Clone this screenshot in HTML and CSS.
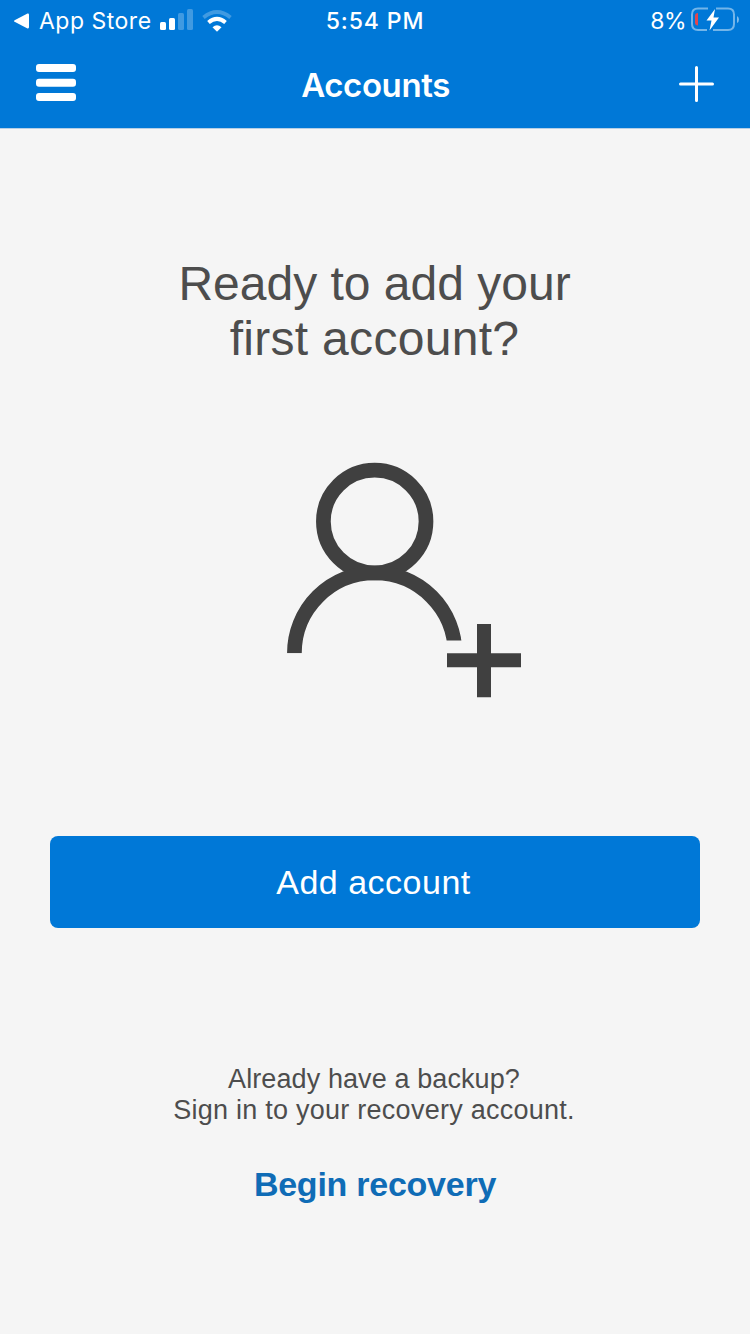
FILE: index.html
```html
<!DOCTYPE html>
<html lang="en">
<head>
  <meta charset="utf-8">
  <title>Accounts</title>
  <link rel="stylesheet" href="styles.css">
</head>
<body>
  <header>
    <div class="statusbar">
      <div class="status-left">
        <svg class="back" width="16" height="16" viewBox="0 0 16 16"><path d="M0.6 7.2 L13.5 0.6 Q15 0.2 15 2 V14 Q15 15.8 13.5 15.4 L0.6 8.8 Q-0.6 8 0.6 7.2 Z" fill="#fff"/></svg>
        <span class="carrier">App Store</span>
        <svg class="signal" width="34" height="22" viewBox="0 0 34 22" fill="#fff">
          <rect x="0" y="13" width="6" height="8" rx="1.5"/>
          <rect x="9" y="9" width="6" height="12" rx="1.5"/>
          <rect x="18" y="4" width="6" height="17" rx="1.5" opacity=".25"/>
          <rect x="27" y="0" width="6" height="21" rx="1.5" opacity=".25"/>
        </svg>
        <svg class="wifi" width="30" height="22" viewBox="0 0 30 22" fill="none" stroke="#fff">
          <path d="M1.5 7.5 Q15 -3.5 28.5 7.5" stroke-width="3.8" opacity=".25"/>
          <path d="M6.5 12.5 Q15 5.2 23.5 12.5" stroke-width="4"/>
          <path d="M10.5 17.3 Q15 13 19.5 17.3 L15.5 21.2 Q15 21.6 14.5 21.2 Z" fill="#fff" stroke="none"/>
        </svg>
      </div>
      <div class="clock">5:54 PM</div>
      <div class="status-right">
        <span class="percent">8%</span>
        <svg class="battery" width="48" height="26" viewBox="0 0 48 26">
          <path d="M17 1.5 H7 Q1 1.5 1 7.5 V17 Q1 23 7 23 H16 M25 1.5 H37 Q43 1.5 43 7.5 V17 Q43 23 37 23 H22" fill="none" stroke="#fff" stroke-opacity=".45" stroke-width="2"/>
          <path d="M46 9 Q48 10 48 12.5 Q48 15 46 16 Z" fill="#fff" opacity=".5"/>
          <path d="M7 6 V18.5 Q4 18.5 4 15.5 V9 Q4 6 7 6 Z" fill="#e0474f"/>
          <path d="M24 2 L15.5 13.5 H20.5 L18.5 23.5 L28 10.5 H22.5 Z" fill="#fff"/>
        </svg>
      </div>
    </div>
    <div class="navbar">
      <svg class="menu" width="40" height="37" viewBox="0 0 40 37" fill="#fff">
        <rect width="40" height="8" rx="3"/>
        <rect y="14.7" width="40" height="8" rx="3"/>
        <rect y="29" width="40" height="8" rx="3"/>
      </svg>
      <h1>Accounts</h1>
      <svg class="add" width="36" height="36" viewBox="0 0 36 36" stroke="#fff" stroke-width="3" stroke-linecap="round"><path d="M17.5 1.5 V34.5 M1.5 18 H33.5"/></svg>
    </div>
  </header>

  <main>
    <h2>Ready to add your<br><span class="wide">first account?</span></h2>

    <svg class="person" width="300" height="250" viewBox="225 450 300 250" fill="none" stroke="#404040" stroke-width="14.7">
      <!-- right shoulder stops short of the plus -->
      <clipPath id="shoulders"><path d="M280 560 H470 V640.6 H374 V653.3 H280 Z"/></clipPath>
      <circle cx="374.7" cy="521.5" r="51.3"/>
      <path d="M294.4 653.3 A80.3 80.3 0 0 1 455 653.3" clip-path="url(#shoulders)"/>
      <path d="M447 660.3 H521 M484 624 V697.3" stroke-width="14"/>
    </svg>

    <button class="add-account">Add account</button>

    <p class="backup">Already have a backup?<br><span class="signin">Sign in to your recovery account.</span></p>
    <a class="recovery">Begin recovery</a>
  </main>
</body>
</html>
```

FILE: styles.css
```css
body {
  margin: 0;
  background-color: #f5f5f5;
  font-family: "Liberation Sans", Arial, sans-serif;
  color: #4d4d4d;
}

header {
  box-sizing: border-box;
  height: 129px;
  background-color: #0078d7;
  color: #fff;
  font-family: Inter, sans-serif;
  border-bottom: 1px solid #b5cfe6;
}

svg {
  display: block;
  flex: none;
}

.statusbar, .navbar {
  display: grid;
  grid-template-columns: 1fr auto 1fr;
  align-items: center;
}

.statusbar {
  box-sizing: border-box;
  height: 40px;
  padding-top: 2px;
  font-size: 23px;
  line-height: 38px;
}

.status-left, .status-right {
  display: flex;
  align-items: center;
}

.status-left {
  padding-left: 14px;
}

.carrier {
  margin: 0 8px 0 9px;
  letter-spacing: 0.5px;
}

.signal {
  margin: 0 8px 2px 0;
}

.clock {
  font-weight: 500;
  letter-spacing: 0.9px;
}

.status-right {
  justify-content: flex-end;
  padding-right: 11px;
}

.percent {
  margin-right: 5px;
  letter-spacing: -0.5px;
}

.battery {
  margin-bottom: 2px;
}

.navbar {
  height: 88px;
  padding: 0 35px 0 36px;
}

.menu {
  margin-bottom: 3px;
}

h1 {
  margin: 1px 0 0;
  font-size: 33px;
  font-weight: 600;
  letter-spacing: -0.4px;
}

.add {
  justify-self: end;
}

main {
  display: flex;
  flex-direction: column;
  align-items: center;
  text-align: center;
}

h2 {
  margin: 127px 1px 0 0;
  font-size: 48px;
  line-height: 55px;
  font-weight: normal;
}

.wide {
  letter-spacing: 0.3px;
}

.person {
  margin-top: 84px;
}

.add-account {
  width: 650px;
  height: 92px;
  margin-top: 136px;
  padding: 0 3px 0 0;
  border: 0;
  border-radius: 8px;
  background-color: #0078d7;
  color: #fff;
  font-family: inherit;
  font-size: 34px;
  letter-spacing: 0.5px;
}

.backup {
  margin: 136px 2px 0 0;
  font-size: 27px;
  line-height: 31px;
  letter-spacing: 0.1px;
}

.signin {
  letter-spacing: 0.25px;
}

.recovery {
  margin-top: 38px;
  font-size: 34px;
  line-height: 40px;
  font-weight: bold;
  letter-spacing: -0.25px;
  color: #0f6cb6;
}
```
